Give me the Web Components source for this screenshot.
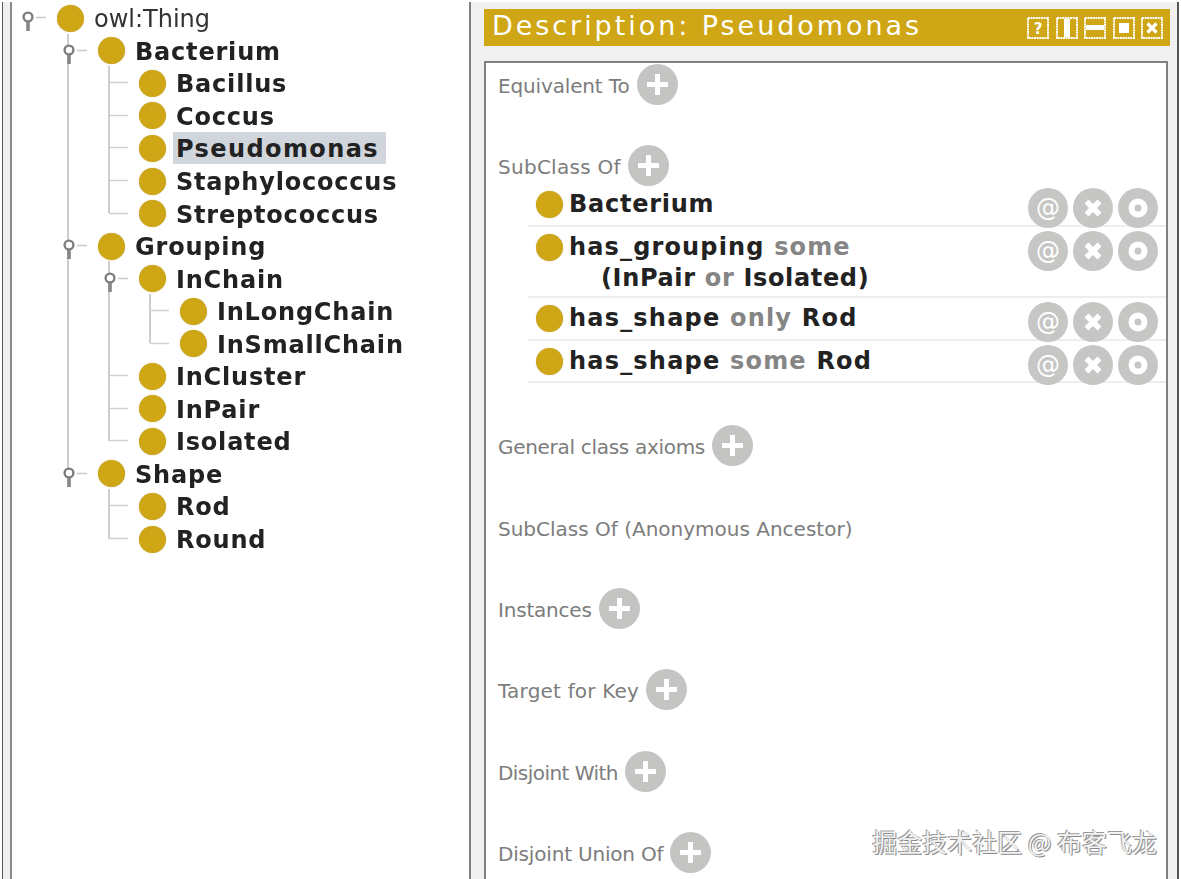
<!DOCTYPE html>
<html lang="en">
<head>
<meta charset="utf-8">
<title>Description: Pseudomonas</title>
<style>
  html, body { margin: 0; height: 100%; background: #fff; overflow: hidden; }
  body { font-family: "DejaVu Sans", sans-serif; }
</style>
</head>
<body>
<onto-app>
  <class-tree slot="tree">
    <tree-node label="owl:Thing" plain open>
      <tree-node label="Bacterium" open>
        <tree-node label="Bacillus"></tree-node>
        <tree-node label="Coccus"></tree-node>
        <tree-node label="Pseudomonas" selected></tree-node>
        <tree-node label="Staphylococcus"></tree-node>
        <tree-node label="Streptococcus"></tree-node>
      </tree-node>
      <tree-node label="Grouping" open>
        <tree-node label="InChain" open>
          <tree-node label="InLongChain"></tree-node>
          <tree-node label="InSmallChain"></tree-node>
        </tree-node>
        <tree-node label="InCluster"></tree-node>
        <tree-node label="InPair"></tree-node>
        <tree-node label="Isolated"></tree-node>
      </tree-node>
      <tree-node label="Shape" open>
        <tree-node label="Rod"></tree-node>
        <tree-node label="Round"></tree-node>
      </tree-node>
    </tree-node>
  </class-tree>

  <desc-panel slot="desc" title="Description: Pseudomonas">
    <desc-section label="Equivalent To" spacing="-0.15" add></desc-section>
    <desc-section label="SubClass Of" spacing="0.27" add>
      <axiom-row h="43" spacing="0.75">Bacterium</axiom-row>
      <axiom-row h="71" spacing="1.15">has_grouping <key-word>some</key-word><br><axiom-indent>(InPair <key-word>or</key-word> Isolated)</axiom-indent></axiom-row>
      <axiom-row h="43" spacing="1.2">has_shape <key-word>only</key-word> Rod</axiom-row>
      <axiom-row h="42" spacing="1.2">has_shape <key-word>some</key-word> Rod</axiom-row>
    </desc-section>
    <desc-section label="General class axioms" spacing="-0.3" add></desc-section>
    <desc-section label="SubClass Of (Anonymous Ancestor)"></desc-section>
    <desc-section label="Instances" spacing="-0.2" add></desc-section>
    <desc-section label="Target for Key" spacing="0.2" add></desc-section>
    <desc-section label="Disjoint With" spacing="-0.55" add></desc-section>
    <desc-section label="Disjoint Union Of" spacing="-0.18" add></desc-section>
  </desc-panel>
</onto-app>

<script>
// main split: class tree on the left, description view on the right
class OntoApp extends HTMLElement {
  connectedCallback() {
    const shadow = this.attachShadow({ mode: 'open' })
    shadow.innerHTML = `
      <style>
        :host { display: flex; height: 879px; overflow: hidden; position: relative; filter: blur(0.35px); }
        .gutter {
          width: 7px; flex: none; margin: 2px 0 0 2px; background: #f0f0f0;
          border-left: 1px solid #555; border-right: 2px solid #8a8a8a;
        }
        .left { width: 457px; flex: none; overflow: hidden; }
        .right { flex: 1; min-width: 0; }
        .mark {
          position: absolute; right: 24px; top: 824px;
          font: 25px/34px "Noto Sans CJK SC", sans-serif;
          color: #f2f2f2;
          text-shadow: -1px -1px 0 #9a9a9a, 1px 1px 0 #8a8a8a;
        }
      </style>
      <div class="gutter"></div>
      <div class="left"><slot name="tree"></slot></div>
      <div class="right"><slot name="desc"></slot></div>
      <div class="mark">掘金技术社区 @ 布客飞龙</div>
    `
  }
}

class ClassTree extends HTMLElement {
  connectedCallback() {
    const shadow = this.attachShadow({ mode: 'open' })
    shadow.innerHTML = `
      <style>
        :host { display: block; padding: 2px 0 0 4px; }
      </style>
      <slot></slot>
    `
  }
}

class TreeNode extends HTMLElement {
  connectedCallback() {
    const label = this.getAttribute('label')
    const shadow = this.attachShadow({ mode: 'open' })
    const isRoot = this.parentElement.localName !== 'tree-node'
    const isLast = !this.nextElementSibling
    const handle = `
      <svg class="handle" width="30" height="32" viewBox="0 0 30 32">
        <path d="M20 15.5h10" stroke="#c8c8c8" stroke-width="1.5" fill="none"/>
        <circle cx="12" cy="15" r="4.4" fill="#fff" stroke="#7d7d7d" stroke-width="2.4"/>
        <path d="M12 20v9" stroke="#868686" stroke-width="3.6" fill="none"/>
      </svg>`
    const stub = `
      <svg class="handle" width="30" height="32" viewBox="0 0 30 32">
        <path d="M11 15.5h19" stroke="#d0d0d0" stroke-width="1.5" fill="none"/>
      </svg>`
    shadow.innerHTML = `
      <style>
        :host { display: block; position: relative; }
        .guide {
          position: absolute; left: 10px; top: -1px; width: 2px; background: #cdcdcd;
          height: ${isLast ? '17px' : '100%'};
        }
        .row { display: flex; align-items: center; height: 32.56px; }
        .cell { width: 41px; flex: none; height: 32px; position: relative; z-index: 1; }
        .handle { display: block; }
        .dot { width: 27px; height: 27px; border-radius: 50%; background: #cfa615; flex: none; box-shadow: 0 0 1px #b5a878; }
        .text {
          margin-left: 7px; padding: 1px 7px 0 3px; height: 31px; line-height: 32px;
          font-size: 24px; font-weight: 700; letter-spacing: 0.8px; color: #222; white-space: nowrap;
        }
        :host([plain]) .text { font-weight: 400; letter-spacing: 0; color: #333; }
        :host([selected]) .text { background: #d1d6dd; letter-spacing: 1.4px; }
        .kids { margin-left: 41px; }
      </style>
      ${isRoot ? '' : '<div class="guide"></div>'}
      <div class="row">
        <div class="cell">${this.hasAttribute('open') ? handle : stub}</div>
        <span class="dot"></span>
        <span class="text">${label}</span>
      </div>
      <div class="kids"><slot></slot></div>
    `
  }
}

class DescPanel extends HTMLElement {
  connectedCallback() {
    const shadow = this.attachShadow({ mode: 'open' })
    const frame = '<rect x="1" y="1" width="20" height="20" stroke-width="2" stroke-dasharray="2 .6"/>'
    shadow.innerHTML = `
      <style>
        :host { display: block; height: 877px; box-sizing: border-box; margin: 2px 2px 0 0; border-left: 2px solid #808080; border-right: 2px solid #555; background: #f0f0f0; padding: 7px 6px 0 13px; }
        .bar {
          height: 37px; background: #cfa615; display: flex; align-items: center; padding: 0 7px 0 8px; margin-right: 1px;
        }
        .title { flex: 1; font-size: 27px; line-height: 34px; margin-bottom: 3px; color: #fff; letter-spacing: 2.95px; white-space: nowrap; }
        .btns { display: flex; gap: 6.5px; }
        .btns svg { display: block; }
        .body {
          margin-top: 15px; height: 820px; width: 684px; box-sizing: border-box;
          background: #fff; border: 2px solid #808080; border-bottom: 0; padding: 2px 0 0 12px;
        }
      </style>
      <div class="bar">
        <span class="title">${this.getAttribute('title')}</span>
        <div class="btns">
          <svg width="22" height="22" viewBox="0 0 22 22" fill="none" stroke="#fff">${frame}<text x="11" y="17" text-anchor="middle" font-family="DejaVu Sans" font-weight="700" font-size="15" fill="#fff" stroke="none">?</text></svg>
          <svg width="22" height="22" viewBox="0 0 22 22" fill="none" stroke="#fff">${frame}<path d="M11 2v18" stroke-width="6"/></svg>
          <svg width="22" height="22" viewBox="0 0 22 22" fill="none" stroke="#fff">${frame}<path d="M2 10.5h18" stroke-width="5"/></svg>
          <svg width="22" height="22" viewBox="0 0 22 22" fill="none" stroke="#fff">${frame}<rect x="6" y="6" width="10" height="10" fill="#fff" stroke="none"/></svg>
          <svg width="22" height="22" viewBox="0 0 22 22" fill="none" stroke="#fff">${frame}<path d="M6.5 6.5l9 9M15.5 6.5l-9 9" stroke-width="3.2"/></svg>
        </div>
      </div>
      <div class="body"><slot></slot></div>
    `
  }
}

class DescSection extends HTMLElement {
  connectedCallback() {
    const shadow = this.attachShadow({ mode: 'open' })
    const spacing = this.getAttribute('spacing') || '0'
    const add = this.hasAttribute('add') ? `
      <svg class="add" width="41" height="41" viewBox="0 0 41 41">
        <circle cx="20.5" cy="20.5" r="20.5" fill="#c4c4c2"/>
        <path d="M20.5 10v21M10 20.5h21" stroke="#fff" stroke-width="5" fill="none"/>
      </svg>` : ''
    shadow.innerHTML = `
      <style>
        :host { display: block; padding-bottom: 40.4px; }
        .head { display: flex; align-items: center; gap: 7px; height: 41px; }
        .label { font-size: 20px; color: #7c7c7c; letter-spacing: ${spacing}px; white-space: nowrap; }
        .add { display: block; flex: none; margin-top: -3px; }
        .rows { margin-left: 30px; }
        .rows ::slotted(axiom-row:last-child) { margin-bottom: 3px; }
      </style>
      <div class="head"><span class="label">${this.getAttribute('label')}</span>${add}</div>
      <div class="rows"><slot></slot></div>
    `
  }
}

// grey restriction keyword inside an axiom (some, only, or)
class KeyWord extends HTMLElement {
  connectedCallback() {
    const shadow = this.attachShadow({ mode: 'open' })
    shadow.innerHTML = `
      <style>
        :host { display: inline; color: #858585; }
      </style>
      <slot></slot>
    `
  }
}

class AxiomIndent extends HTMLElement {
  connectedCallback() {
    const shadow = this.attachShadow({ mode: 'open' })
    shadow.innerHTML = `
      <style>
        :host { display: inline-block; padding-left: 32px; letter-spacing: 0.65px; }
      </style>
      <slot></slot>
    `
  }
}

class AxiomRow extends HTMLElement {
  connectedCallback() {
    const shadow = this.attachShadow({ mode: 'open' })
    const h = this.getAttribute('h')
    const spacing = this.getAttribute('spacing') || '1.3'
    const chip = (inner) => `
      <svg width="40" height="40" viewBox="0 0 40 40">
        <circle cx="20" cy="20" r="20" fill="#c6c6c4"/>${inner}
      </svg>`
    shadow.innerHTML = `
      <style>
        :host {
          display: flex; height: ${h}px; box-sizing: border-box; border-bottom: 2px solid #eeeeee;
          padding-left: 8px; padding-right: 8px; align-items: flex-start;
        }
        :host(:first-child) { margin-top: -3px; }
        .dot { width: 27px; height: 27px; border-radius: 50%; background: #cfa615; flex: none; margin-top: 7px; box-shadow: 0 0 1px #b5a878; }
        .text {
          flex: 1; margin-left: 6px; padding-top: 5px; font-size: 24px; font-weight: 700; line-height: 31px;
          letter-spacing: ${spacing}px; color: #222; white-space: nowrap;
        }
        .chips { display: flex; gap: 5px; margin-top: 4px; }
        .chips svg { display: block; }
      </style>
      <span class="dot"></span>
      <div class="text"><slot></slot></div>
      <div class="chips">
        ${chip('<text x="20" y="28" text-anchor="middle" font-family="DejaVu Sans" font-size="24" fill="#fff">@</text>')}
        ${chip('<path d="M13.5 13.5l13 13M26.5 13.5l-13 13" stroke="#fff" stroke-width="5.5" fill="none"/>')}
        ${chip('<circle cx="20" cy="20" r="6.5" fill="none" stroke="#fff" stroke-width="6"/>')}
      </div>
    `
  }
}

customElements.define('onto-app', OntoApp)
customElements.define('class-tree', ClassTree)
customElements.define('tree-node', TreeNode)
customElements.define('desc-panel', DescPanel)
customElements.define('desc-section', DescSection)
customElements.define('key-word', KeyWord)
customElements.define('axiom-indent', AxiomIndent)
customElements.define('axiom-row', AxiomRow)
</script>
</body>
</html>
